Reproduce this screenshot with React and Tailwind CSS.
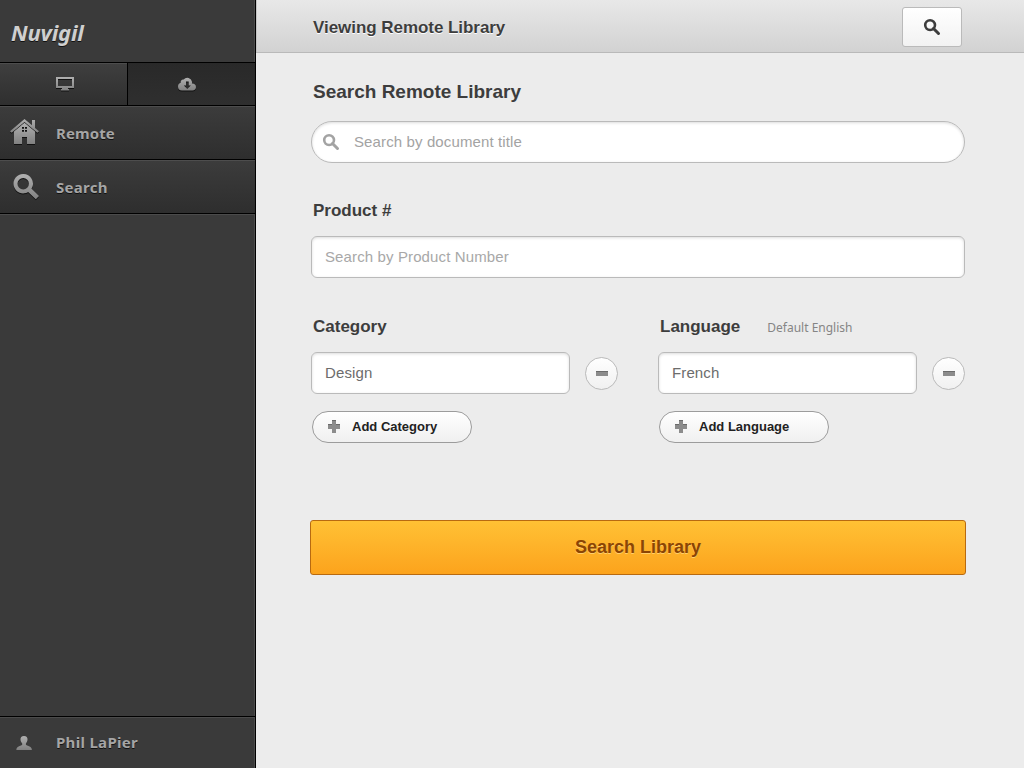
import React from "react";

function Metal({ id }) {
  return (
    <defs>
      <linearGradient id={id} x1="0" y1="0" x2="0" y2="1">
        <stop offset="0" stopColor="#b0b0b0" />
        <stop offset="1" stopColor="#818181" />
      </linearGradient>
    </defs>
  );
}

const iconShadow = "drop-shadow-[0_1px_0_#111]";

function MonitorIcon() {
  return (
    <svg width="20" height="16" viewBox="0 0 20 16" className={iconShadow}>
      <Metal id="mon" />
      <path fill="url(#mon)" fillRule="evenodd" d="M1 1h18v11h-6v1h1v1.500H6V13h1v-1H1ZM3 3v7h14V3Z" />
    </svg>
  );
}

function CloudIcon() {
  return (
    <svg width="20" height="16" viewBox="0 0 20 16" className={iconShadow}>
      <Metal id="cld" />
      <path fill="url(#cld)" fillRule="evenodd" d="M5 14.500a4 4 0 0 1-4-4c0-2 1.300-3.300 2.700-3.700C3.400 4.500 4.800 3.200 6.700 3.500A4.700 4.700 0 0 1 15 5.800c.2.700-.1 1.700-.1 1.700C17.500 7.500 19 9 19 11s-1.400 3.500-3.500 3.500ZM9 5.500v4H6.800L10.300 13 13.800 9.500H11.700v-4Z" />
    </svg>
  );
}

function HouseIcon() {
  return (
    <svg width="29" height="27" viewBox="0 0 29 27" className={iconShadow}>
      <Metal id="hse" />
      <g fill="url(#hse)">
        <path d="M14.500 0 0 12.300l1.700 1.500L14.500 3l12.800 10.800 1.700-1.500-4-3.400V1h-3v5.300Z" />
        <path fillRule="evenodd" d="M14.500 3.700 4 12.500V25h8v-7h5v7h8V12.500ZM12 8h2v2h-2Zm3 0h2v2h-2ZM12 11h2v2h-2Zm3 0h2v2h-2Z" />
      </g>
    </svg>
  );
}

function BigLensIcon() {
  return (
    <svg width="28" height="28" viewBox="0 0 28 28" className={"mt-px ml-[3px] " + iconShadow}>
      <Metal id="lns" />
      <path fill="url(#lns)" fillRule="evenodd" d="M10.200 1a9.700 9.700 0 1 0 5 18l7.600 7.300 3.200-3.200-7.500-7.300A9.700 9.700 0 0 0 10.200 1Zm0 4a5.700 5.700 0 1 1 0 11.400a5.700 5.700 0 0 1 0-11.400Z" />
    </svg>
  );
}

function PersonIcon() {
  return (
    <svg width="16" height="15" viewBox="0 0 16 15">
      <Metal id="prs" />
      <path fill="url(#prs)" d="M8 0c2.500 0 3.700 1.500 3.500 3.800-.2 2-1 2.900-1.600 3.600v1.400c.5 1 5.800 1.200 6 5.200H.3c.2-4 5.400-4.200 5.900-5.200V7.400c-.6-.7-1.500-1.600-1.700-3.600C4.300 1.500 5.500 0 8 0Z" />
    </svg>
  );
}

function Lens({ color }) {
  return (
    <svg width="18" height="18" viewBox="0 0 18 18" fill="none" stroke={color}>
      <circle cx="7.100" cy="7.100" r="4.900" strokeWidth="2.600" />
      <path d="m10.500 10.500 5 5" strokeWidth="3" strokeLinecap="round" />
    </svg>
  );
}

const sideText = "font-['Noto_Sans',sans-serif] text-[15px] leading-[20px] font-bold text-[#a5a5a5] [text-shadow:0_1px_0_#111]";

function NavRow({ icon, label, tracking }) {
  return (
    <a className="flex h-[54px] items-center border-b border-b-black bg-linear-to-b from-[#3c3c3c] to-[#2e2e2e] shadow-[inset_0_1px_0_#4d4d4d]">
      <span className="flex w-14 shrink-0 pl-[10px]">{icon}</span>
      <span className={sideText + " " + tracking}>{label}</span>
    </a>
  );
}

const heading = "text-[17px] leading-[20px] font-bold text-[#3d3d3d]";
const field = "flex h-[42px] items-center border border-[#bababa] bg-white text-[15px] tracking-[0.12px] shadow-[inset_0_1px_3px_rgba(0,0,0,0.14)]";

function Filter({ title, hint, value, action, buttonWidth }) {
  return (
    <section className="w-[307px]">
      <div className="flex h-5 items-center pl-[2px]">
        <h3 className={heading + " mt-[2px]"}>{title}</h3>
        {hint && <span className="mt-[3px] ml-[27px] font-['Noto_Sans',sans-serif] text-[12px] leading-[16px] text-[#858585]">{hint}</span>}
      </div>
      <div className="mt-4 flex items-center justify-between">
        <div className={field + " w-[259px] rounded-[6px] pl-[13px] text-[#6c6c6c]"}>{value}</div>
        <button aria-label="Remove" className="flex size-[33px] items-center justify-center rounded-full border border-[#bababa] bg-linear-to-b from-white to-[#f0f0f0]">
          <span className="h-[5px] w-3 border-t border-[#6b6b6b] bg-[#8c8c8c]" />
        </button>
      </div>
      <button className={"mt-[17px] ml-px flex h-8 items-center rounded-full border border-[#9c9c9c] bg-linear-to-b from-white to-[#f0f0f0] pl-[15px] text-[13px] font-bold text-[#222] " + buttonWidth}>
        <svg width="12" height="13" viewBox="0 0 12 13" className="mr-3 -mt-px">
          <path fill="#8c8c8c" d="M4 0h4v4h4v5H8v4H4V9H0V4h4Z" />
          <path fill="#6b6b6b" d="M4 0h4v1H4ZM0 4h4v1H0ZM8 4h4v1H8Z" />
        </svg>
        {action}
      </button>
    </section>
  );
}

export default function App() {
  return (
    <div className="flex h-[768px] w-[1024px] overflow-hidden bg-[#ececec] font-['Liberation_Sans',Arial,sans-serif]">
      <aside className="flex w-64 shrink-0 flex-col border-r border-r-black bg-[#3a3a3a]">
        <div className="h-[63px] border-b border-b-black pt-[17px] pl-[11px] shadow-[inset_-1px_0_0_#4b4b4b]">
          <h1 className="font-['Noto_Sans',sans-serif] text-[22px] leading-[30px] font-bold tracking-[-0.2px] text-[#cfcfcf] italic [text-shadow:0_1px_0_#111]">Nuvigil</h1>
        </div>
        <div className="flex h-[43px] border-b border-b-black">
          <div className="flex w-32 items-center justify-center border-r border-r-black bg-linear-to-b from-[#3f3f3f] to-[#2f2f2f] pl-[3px] shadow-[inset_0_1px_0_#4d4d4d]"><MonitorIcon /></div>
          <div className="flex flex-1 items-center justify-center bg-linear-to-b from-[#292929] to-[#2f2f2f] pr-[9px]"><CloudIcon /></div>
        </div>
        <NavRow icon={<HouseIcon />} label="Remote" tracking="tracking-[0.1px]" />
        <NavRow icon={<BigLensIcon />} label="Search" tracking="tracking-[0.3px]" />
        <div className="flex-1 shadow-[inset_-1px_0_0_#4b4b4b,inset_0_1px_0_#4b4b4b]" />
        <div className="flex h-[52px] items-center border-t border-t-black shadow-[inset_0_1px_0_#4b4b4b,inset_-1px_0_0_#4b4b4b]">
          <span className="mt-[2px] flex w-14 pl-4"><PersonIcon /></span>
          <span className={sideText + " -mt-[2px] tracking-[0.3px]"}>Phil LaPier</span>
        </div>
      </aside>
      <main className="flex-1">
        <header className="flex h-[53px] items-center justify-between border-b border-b-[#b9b9b9] bg-linear-to-b from-[#e8e8e8] to-[#d2d2d2] pr-[62px] pl-[57px] shadow-[inset_1px_0_0_#c4c4c4]">
          <h2 className={heading + " mt-[3px] tracking-[-0.05px] [text-shadow:0_1px_0_#fff]"}>Viewing Remote Library</h2>
          <button aria-label="Search" className="mt-px flex h-10 w-[60px] items-center justify-center rounded-[3px] border border-[#bababa] bg-linear-to-b from-white to-[#f2f2f2]"><Lens color="#3d3d3d" /></button>
        </header>
        <div className="w-[709px] pt-7 pl-[55px]">
          <h2 className="pl-[2px] text-[19px] leading-[22px] font-bold text-[#3d3d3d]">Search Remote Library</h2>
          <div className={field + " mt-[18px] rounded-full pl-[10px] text-[#a3a3a3]"}>
            <Lens color="#a3a3a3" />
            <span className="ml-[14px]">Search by document title</span>
          </div>
          <h3 className={heading + " mt-[38px] pl-[2px]"}>Product #</h3>
          <div className={field + " mt-[15px] rounded-[6px] pl-[13px] text-[#a8a8a8]"}>Search by Product Number</div>
          <div className="mt-[38px] flex justify-between">
            <Filter title="Category" value="Design" action="Add Category" buttonWidth="w-[160px]" />
            <Filter title="Language" hint="Default English" value="French" action="Add Language" buttonWidth="w-[170px]" />
          </div>
          <button className="mt-[77px] -ml-px flex h-[55px] w-[656px] items-center justify-center rounded-[3px] border border-[#b86a10] bg-linear-to-b from-[#ffc134] to-[#fca31c] text-[18px] font-bold text-[#8b4504] [text-shadow:0_1px_0_#ffcf6b]">Search Library</button>
        </div>
      </main>
    </div>
  );
}
